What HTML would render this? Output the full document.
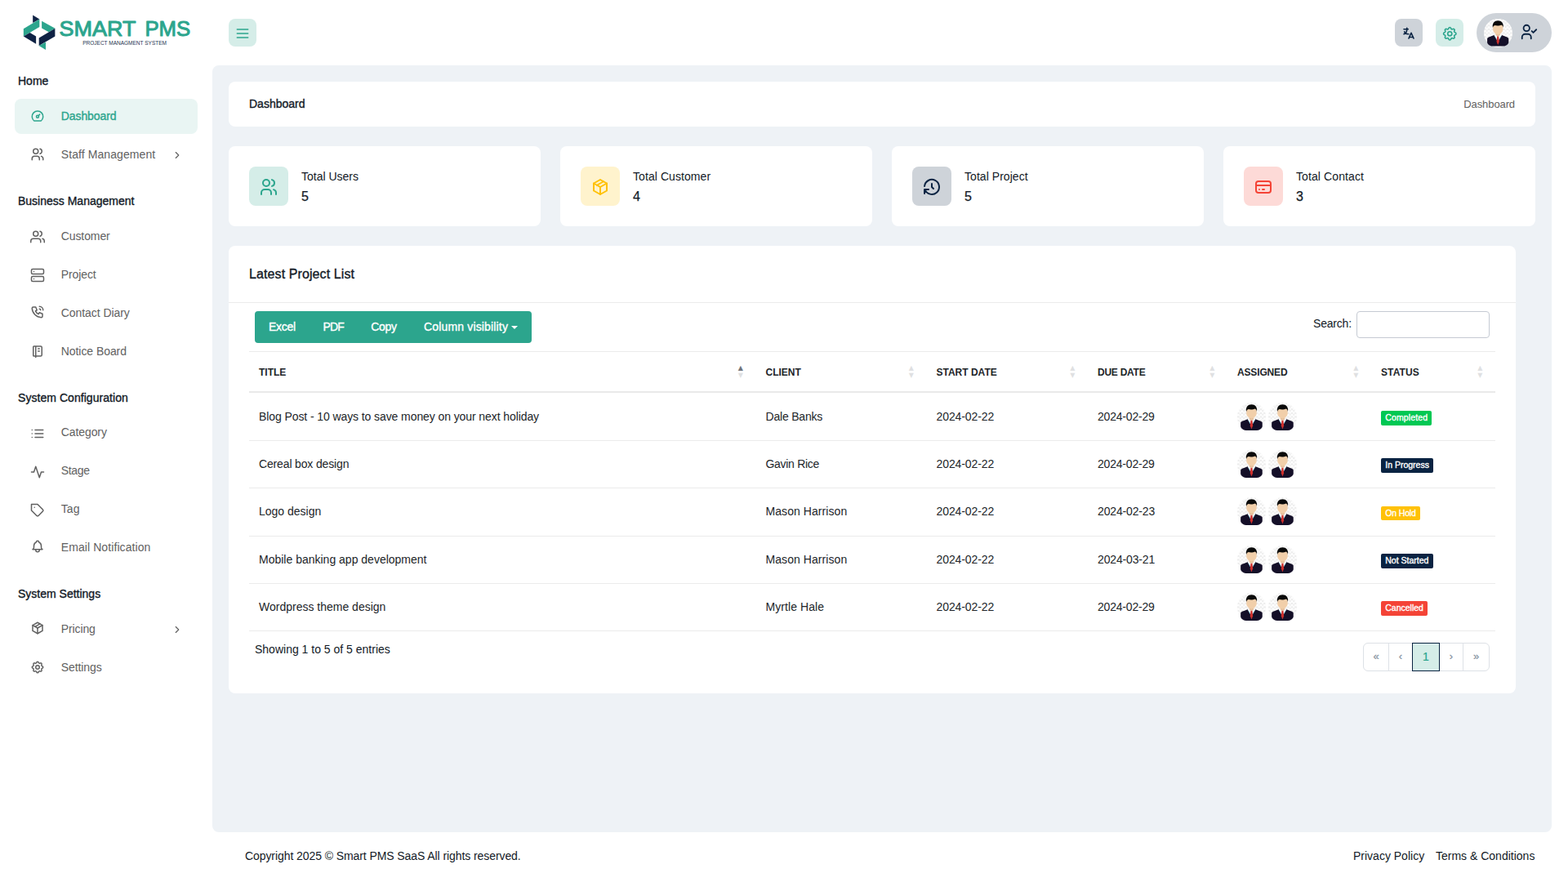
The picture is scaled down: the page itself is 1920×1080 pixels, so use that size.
<!DOCTYPE html>
<html lang="en">
<head>
<meta charset="utf-8">
<title>Dashboard | Smart PMS SaaS</title>
<style>
*{box-sizing:border-box}
html,body{margin:0;padding:0}
body{width:1920px;height:1080px;overflow:hidden;background:#fff;font-family:"Liberation Sans",sans-serif;font-size:14px;color:#121926;position:relative;line-height:1.5}
.abs{position:absolute}
a{text-decoration:none}
.med{-webkit-text-stroke:.35px currentColor}
svg.ti{fill:none;stroke:currentColor;stroke-width:2;stroke-linecap:round;stroke-linejoin:round;display:block}
#sidebar{position:absolute;left:0;top:0;width:260px;height:1080px;background:#fff}
.cap{position:absolute;left:22px;font-size:14px;color:#121926;line-height:20px;white-space:nowrap}
.nav{position:absolute;left:18px;width:224px;height:43px;border-radius:8px;color:#616161;white-space:nowrap;display:block}
.nav.active{background:#e9f5f3;color:#2ca58d}
.nav svg.ti{position:absolute;left:19px;top:11.6px;width:18px;height:18px;stroke-width:2}
.nav svg.ti.fe{top:12.5px}
.nav .lbl{position:absolute;left:56.75px;top:0;line-height:43px;font-size:14px}
.nav svg.arrow{position:absolute;left:192px;top:15px;width:14px;height:14px;stroke-width:2}
.hbtn{position:absolute;width:34px;height:34px;border-radius:8px;top:23px}
#main{position:absolute;left:260px;top:80px;width:1640px;height:939px;background:#eef2f6;border-radius:8px}
.card{position:absolute;background:#fff;border-radius:8px}
.stat .ibox{position:absolute;left:25px;top:25px;width:48px;height:48px;border-radius:8px}
.stat .ibox svg{position:absolute;left:12px;top:13px;width:24px;height:24px;stroke-width:2}
.stat .t{position:absolute;left:89px;top:26px;line-height:22px;font-size:14px;white-space:nowrap;color:#121926}
.stat .n{position:absolute;left:89px;top:50px;line-height:24px;font-size:16px;-webkit-text-stroke:.25px currentColor;white-space:nowrap;color:#121926}
.btns span{position:absolute;top:0;line-height:39px;font-size:14px;white-space:nowrap}
.btns .caret{position:absolute;left:314px;top:18px;width:0;height:0;border-left:4px solid transparent;border-right:4px solid transparent;border-top:4px solid #fff}
.th{position:absolute;top:0;height:49px}
.th .thl{position:absolute;left:12px;top:1px;line-height:49px;font-size:12px;font-weight:700;color:#212529;white-space:nowrap}
.th::before,.th::after{position:absolute;right:15.5px;font-size:8px;line-height:9px;color:#121926;opacity:.13;font-family:"DejaVu Sans",sans-serif}
.th.asc::before{opacity:.6}
.th::before{content:"\25B2";top:15px}
.th::after{content:"\25BC";top:24px}
.tr{position:absolute;left:0;width:1526px;border-bottom:1px solid #ebebeb}
.td{position:absolute;top:0;padding-left:12px;font-size:14px;color:#212529;white-space:nowrap}
.badge{position:absolute;height:18px;line-height:17px;padding:0 5.25px;font-size:10.5px;font-weight:400;color:#fff;border-radius:2px;white-space:nowrap}
.pg span{position:absolute;top:0;height:35px;border:1px solid #dde1e6;line-height:32px;text-align:center;font-size:13px;color:#8592a0;background:#fff}
.pg span.act{font-size:14px;line-height:33px}
.pg span.act{background:#d5ede8;border-color:#0a2342;color:#2ca58d;z-index:2}
.av{position:absolute;border-radius:50%;background-color:#fdfdfd;background-image:conic-gradient(#ececec 25%,#fdfdfd 0 50%,#ececec 0 75%,#fdfdfd 0);background-size:4.6px 4.6px}
.av svg{display:block;overflow:visible}
.pg span{-webkit-text-stroke:.2px currentColor}

</style>
</head>
<body>
<div id="sidebar">
<svg class="abs" style="left:0;top:0" width="260" height="80" viewBox="0 0 260 80">
<polygon points="40.2,18.6 48.3,23.4 40.2,28" fill="#0f2244"/>
<polygon points="28.8,35.3 48.3,23.5 48.3,33 28.8,44.4" fill="#2ca58d"/>
<polygon points="28.8,44.4 36.6,40 44.1,44.4 44.1,53.7" fill="#0f2244"/>
<polygon points="51.1,25.7 67.4,34.8 59.7,39.2 51.1,34.5" fill="#2ca58d"/>
<polygon points="67.4,34.8 67.4,44.4 47.7,56 47.7,46.5" fill="#0f2244"/>
<polygon points="47.7,56 56,51.4 56,61" fill="#2ca58d"/>
<text y="44.400" font-family="Liberation Sans, sans-serif" font-size="26.500" fill="#2ca58d" stroke="#2ca58d" stroke-width="1" stroke-linejoin="round"><tspan x="72.600" textLength="93.400" lengthAdjust="spacingAndGlyphs">SMART</tspan> <tspan x="177.400" textLength="55.800" lengthAdjust="spacingAndGlyphs">PMS</tspan></text>
<text x="101.200" y="54.800" font-family="Liberation Sans, sans-serif" font-size="8" fill="#26334f" textLength="102.800" lengthAdjust="spacingAndGlyphs">PROJECT MANAGMENT SYSTEM</text>
</svg>
<div class="cap med" style="top:89px">Home</div>
<a class="nav active" style="top:121px"><svg class="ti" viewBox="0 0 24 24" ><circle cx="12" cy="13" r="2"/><path d="M13.45 11.55l2.05 -2.05"/><path d="M6.4 20a9 9 0 1 1 11.2 0z"/></svg><span class="lbl med" style="letter-spacing:-0.083px">Dashboard</span></a>
<a class="nav" style="top:168px"><svg class="ti" viewBox="0 0 24 24" ><circle cx="9" cy="7" r="4"/><path d="M3 21v-2a4 4 0 0 1 4 -4h4a4 4 0 0 1 4 4v2"/><path d="M16 3.13a4 4 0 0 1 0 7.75"/><path d="M21 21v-2a4 4 0 0 0 -3 -3.85"/></svg><span class="lbl" style="letter-spacing:0.083px">Staff Management</span><svg class="ti arrow" viewBox="0 0 24 24" ><polyline points="9 18 15 12 9 6"/></svg></a>
<div class="cap med" style="top:236px">Business Management</div>
<a class="nav" style="top:268px"><svg class="ti fe" viewBox="0 0 24 24" ><path d="M17 21v-2a4 4 0 0 0-4-4H5a4 4 0 0 0-4 4v2"/><circle cx="9" cy="7" r="4"/><path d="M23 21v-2a4 4 0 0 0-3-3.870"/><path d="M16 3.130a4 4 0 0 1 0 7.750"/></svg><span class="lbl" style="letter-spacing:-0.094px">Customer</span></a>
<a class="nav" style="top:315px"><svg class="ti fe" viewBox="0 0 24 24" ><rect x="2" y="2" width="20" height="8" rx="2" ry="2"/><rect x="2" y="14" width="20" height="8" rx="2" ry="2"/><line x1="6" y1="6" x2="6.010" y2="6"/><line x1="6" y1="18" x2="6.010" y2="18"/></svg><span class="lbl" style="letter-spacing:-0.107px">Project</span></a>
<a class="nav" style="top:362px"><svg class="ti" viewBox="0 0 24 24" style="margin-top:-0.5px"><path d="M5 4h4l2 5l-2.5 1.5a11 11 0 0 0 5 5l1.5 -2.5l5 2v4a2 2 0 0 1 -2 2a16 16 0 0 1 -15 -15a2 2 0 0 1 2 -2"/><path d="M15 7a2 2 0 0 1 2 2"/><path d="M15 3a6 6 0 0 1 6 6"/></svg><span class="lbl" style="letter-spacing:-0.058px">Contact Diary</span></a>
<a class="nav" style="top:409px"><svg class="ti" viewBox="0 0 24 24" ><path d="M6 4h11a2 2 0 0 1 2 2v12a2 2 0 0 1 -2 2h-11a1 1 0 0 1 -1 -1v-14a1 1 0 0 1 1 -1m3 0v18"/><path d="M13 8h2"/><path d="M13 12h2"/></svg><span class="lbl" style="letter-spacing:-0.062px">Notice Board</span></a>
<div class="cap med" style="top:477px;letter-spacing:0.05px">System Configuration</div>
<a class="nav" style="top:509px"><svg class="ti fe" viewBox="0 0 24 24" ><line x1="8" y1="6" x2="21" y2="6"/><line x1="8" y1="12" x2="21" y2="12"/><line x1="8" y1="18" x2="21" y2="18"/><line x1="3" y1="6" x2="3.010" y2="6"/><line x1="3" y1="12" x2="3.010" y2="12"/><line x1="3" y1="18" x2="3.010" y2="18"/></svg><span class="lbl" style="letter-spacing:-0.094px;top:-1px">Category</span></a>
<a class="nav" style="top:556px"><svg class="ti fe" viewBox="0 0 24 24" ><polyline points="22 12 18 12 15 21 9 3 6 12 2 12"/></svg><span class="lbl" style="letter-spacing:-0.35px;top:-1px">Stage</span></a>
<a class="nav" style="top:603px"><svg class="ti fe" viewBox="0 0 24 24" ><path d="M20.590 13.410l-7.170 7.170a2 2 0 0 1-2.830 0L2 12V2h10l8.590 8.590a2 2 0 0 1 0 2.820z"/><line x1="7" y1="7" x2="7.010" y2="7"/></svg><span class="lbl" style="letter-spacing:0.05px;top:-1px">Tag</span></a>
<a class="nav" style="top:650px"><svg class="ti" viewBox="0 0 24 24" style="margin-top:-1.2px"><path d="M10 5a2 2 0 0 1 4 0a7 7 0 0 1 4 6v3a4 4 0 0 0 2 3h-16a4 4 0 0 0 2 -3v-3a7 7 0 0 1 4 -6"/><path d="M9 17v1a3 3 0 0 0 6 0v-1"/></svg><span class="lbl" style="letter-spacing:0.088px;top:-1px">Email Notification</span></a>
<div class="cap med" style="top:717px">System Settings</div>
<a class="nav" style="top:750px"><svg class="ti" viewBox="0 0 24 24" style="margin-top:-1.4px"><path d="M12 3l8 4.5v9l-8 4.5l-8 -4.5v-9l8 -4.5"/><path d="M12 12l8 -4.5"/><path d="M12 12v9"/><path d="M12 12l-8 -4.5"/><path d="M16 5.25l-8 4.5"/></svg><span class="lbl" style="letter-spacing:-0.107px;top:-1px">Pricing</span><svg class="ti arrow" viewBox="0 0 24 24" style="margin-top:-1px"><polyline points="9 18 15 12 9 6"/></svg></a>
<a class="nav" style="top:797px"><svg class="ti" viewBox="0 0 24 24" style="margin-top:-1.1px"><path d="M10.325 4.317c.426 -1.756 2.924 -1.756 3.35 0a1.724 1.724 0 0 0 2.573 1.066c1.543 -.94 3.31 .826 2.37 2.37a1.724 1.724 0 0 0 1.065 2.572c1.756 .426 1.756 2.924 0 3.35a1.724 1.724 0 0 0 -1.066 2.573c.94 1.543 -.826 3.31 -2.37 2.37a1.724 1.724 0 0 0 -2.572 1.065c-.426 1.756 -2.924 1.756 -3.35 0a1.724 1.724 0 0 0 -2.573 -1.066c-1.543 .94 -3.31 -.826 -2.37 -2.37a1.724 1.724 0 0 0 -1.065 -2.572c-1.756 -.426 -1.756 -2.924 0 -3.35a1.724 1.724 0 0 0 1.066 -2.573c-.94 -1.543 .826 -3.31 2.37 -2.37c1 .608 2.296 .07 2.572 -1.065z"/><circle cx="12" cy="12" r="3"/></svg><span class="lbl" style="letter-spacing:-0.094px;top:-1px">Settings</span></a>
</div>

<div class="hbtn" style="left:280px;background:#d5ede8;color:#2ca58d"><svg class="ti" viewBox="0 0 24 24" style="position:absolute;left:7px;top:8px;width:20px;height:20px;stroke-width:1.9"><path d="M4 6h16"/><path d="M4 12h16"/><path d="M4 18h16"/></svg></div>
<div class="hbtn" style="left:1708px;background:#ced3d9;color:#0a2342"><svg class="ti" viewBox="0 0 24 24" style="position:absolute;left:8.3px;top:9px;width:18px;height:18px;stroke-width:2.2"><path d="M4 5h7"/><path d="M9 3v2c0 4.418 -2.239 8 -5 8"/><path d="M5 9c0 2.144 2.952 3.908 6.7 4"/><path d="M12 20l4 -9l4 9"/><path d="M19.1 18h-6.2"/></svg></div>
<div class="hbtn" style="left:1758px;background:#d5ede8;color:#2ca58d"><svg class="ti" viewBox="0 0 24 24" style="position:absolute;left:7px;top:7.8px;width:20.500px;height:20.500px;stroke-width:1.9"><path d="M10.325 4.317c.426 -1.756 2.924 -1.756 3.35 0a1.724 1.724 0 0 0 2.573 1.066c1.543 -.94 3.31 .826 2.37 2.37a1.724 1.724 0 0 0 1.065 2.572c1.756 .426 1.756 2.924 0 3.35a1.724 1.724 0 0 0 -1.066 2.573c.94 1.543 -.826 3.31 -2.37 2.37a1.724 1.724 0 0 0 -2.572 1.065c-.426 1.756 -2.924 1.756 -3.35 0a1.724 1.724 0 0 0 -2.573 -1.066c-1.543 .94 -3.31 -.826 -2.37 -2.37a1.724 1.724 0 0 0 -1.065 -2.572c-1.756 -.426 -1.756 -2.924 0 -3.35a1.724 1.724 0 0 0 1.066 -2.573c-.94 -1.543 .826 -3.31 2.37 -2.37c1 .608 2.296 .07 2.572 -1.065z"/><circle cx="12" cy="12" r="3"/></svg></div>
<div class="abs" style="left:1808px;top:16px;width:92px;height:48px;border-radius:24px;background:#ced3d9;color:#0a2342">
<div class="av" style="left:9px;top:7px;width:34.5px;height:34.5px"><svg viewBox="0 0.3 34.6 34.6" width="34.5" height="34.5"><path d="M4.100 29.300 V25.300 C4.100 24 4.800 23.400 6 22.900 L12.500 20.300 L17.250 26 L22 20.300 L28.500 22.900 C29.700 23.400 30.400 24 30.400 25.300 V29.300 C30.100 31.200 27.500 33.700 24 33.950 H10.500 C7 33.700 4.400 31.200 4.100 29.300Z" fill="#140f28"/><path d="M12.700 20.600 L14.800 19.200 L19.700 19.200 L21.800 20.600 L17.250 28.500Z" fill="#fff"/><path d="M13.300 21.300 L16.300 26.600 M21.200 21.300 L18.200 26.600" stroke="#7fd3e6" stroke-width=".6" fill="none"/><path d="M16.300 21.200 L18.200 21.200 L18.900 28.300 L17.250 32.500 L15.600 28.300Z" fill="#cf2f2c"/><path d="M14.500 17 H20 V20.200 L17.250 22.300 L14.500 20.200Z" fill="#e6bf9b"/><path d="M11.100 10 C11.100 7.200 13.800 6.300 17.250 6.300 C20.700 6.300 23.400 7.200 23.400 10 V13.300 C23.400 16.400 20.400 19.500 17.250 19.500 C14.100 19.500 11.100 16.400 11.100 13.300Z" fill="#f1cfaa"/><path d="M10.900 11.300 C10 5.600 13 2.600 17.300 2.600 C21.600 2.600 24.600 5.600 23.700 11.300 C23.500 9.300 22.800 8.200 21.300 7.700 C19.500 8.900 15.800 9.100 13.500 8.300 C12.200 8.800 11.300 9.700 10.900 11.300Z" fill="#0a0a0a"/></svg></div>
<svg class="ti" viewBox="0 0 24 24" style="position:absolute;left:53.2px;top:12.3px;width:22px;height:22px;stroke-width:2"><circle cx="9" cy="7" r="4"/><path d="M3 21v-2a4 4 0 0 1 4 -4h4a4 4 0 0 1 4 4v2"/><path d="M16 11l2 2l4 -4"/></svg>
</div>
<div id="main">
<div class="card" style="left:20px;top:20px;width:1600px;height:55px">
<div class="abs med" style="left:25px;top:0;line-height:55px;font-size:14px;color:#121926">Dashboard</div>
<div class="abs" style="right:25px;top:0;line-height:55px;font-size:13px;color:#616161;letter-spacing:-.1px">Dashboard</div>
</div>
<div class="card stat" style="left:20px;top:99px;width:382px;height:98px"><div class="ibox" style="background:#d5ede8;color:#2ca58d"><svg class="ti" viewBox="0 0 24 24" ><circle cx="9" cy="7" r="4"/><path d="M3 21v-2a4 4 0 0 1 4 -4h4a4 4 0 0 1 4 4v2"/><path d="M16 3.13a4 4 0 0 1 0 7.75"/><path d="M21 21v-2a4 4 0 0 0 -3 -3.85"/></svg></div><div class="t">Total Users</div><div class="n med">5</div></div>
<div class="card stat" style="left:426px;top:99px;width:382px;height:98px"><div class="ibox" style="background:#fff3cd;color:#ffc107"><svg class="ti" viewBox="0 0 24 24" ><path d="M12 3l8 4.5v9l-8 4.5l-8 -4.5v-9l8 -4.5"/><path d="M12 12l8 -4.5"/><path d="M12 12v9"/><path d="M12 12l-8 -4.5"/><path d="M16 5.25l-8 4.5"/></svg></div><div class="t" style="letter-spacing:0.07px">Total Customer</div><div class="n med">4</div></div>
<div class="card stat" style="left:832px;top:99px;width:382px;height:98px"><div class="ibox" style="background:#ced3d9;color:#0a2342"><svg class="ti" viewBox="0 0 24 24" ><path d="M12 8v4l2 2"/><path d="M3.05 11a9 9 0 1 1 .5 4m-.5 5v-5h5"/></svg></div><div class="t" style="letter-spacing:0.05px">Total Project</div><div class="n med">5</div></div>
<div class="card stat" style="left:1238px;top:99px;width:382px;height:98px"><div class="ibox" style="background:#fddad7;color:#f44336"><svg class="ti" viewBox="0 0 24 24" ><rect x="3" y="5" width="18" height="14" rx="3"/><path d="M3 10h18"/><path d="M7 15h.01"/><path d="M11 15h2"/></svg></div><div class="t" style="letter-spacing:0.1px">Total Contact</div><div class="n med">3</div></div>

<div class="card" style="left:20px;top:221px;width:1576px;height:548px">
<div class="abs med" style="left:25px;top:21px;line-height:28px;font-size:16px;color:#121926;letter-spacing:.1px">Latest Project List</div>
<div class="abs" style="left:0;top:69px;width:1576px;height:1px;background:#ebebeb"></div>
<div class="abs btns" style="left:32px;top:80px;width:339px;height:39px;border-radius:4px;background:#2ca58d;color:#fff">
<span class="med" style="left:17px;letter-spacing:-.3px">Excel</span><span class="med" style="left:83.400px;letter-spacing:-.8px">PDF</span><span class="med" style="left:142.300px;letter-spacing:-.35px">Copy</span><span class="med" style="left:207px;letter-spacing:.16px">Column visibility</span><i class="caret"></i>
</div>
<div class="abs" style="left:1328px;top:79px;line-height:32px;font-size:14px;color:#121926;letter-spacing:-.2px">Search:</div>
<div class="abs" style="left:1381px;top:80px;width:163px;height:33px;border:1px solid #c5cad3;border-radius:4px;background:#fff"></div>
<div class="abs tbl" style="left:25px;top:0;width:1526px">
<div class="abs" style="left:0;top:129px;width:1526px;height:1px;background:#ebebeb"></div>
<div class="abs thead" style="left:0;top:130px;width:1526px;height:49px"><div class="th asc" style="left:0px;width:620.5px"><span class="thl">TITLE</span></div><div class="th" style="left:620.5px;width:209px"><span class="thl">CLIENT</span></div><div class="th" style="left:829.5px;width:197.5px"><span class="thl">START DATE</span></div><div class="th" style="left:1027px;width:171px"><span class="thl" style="letter-spacing:-0.25px">DUE DATE</span></div><div class="th" style="left:1198px;width:176px"><span class="thl" style="letter-spacing:-0.15px">ASSIGNED</span></div><div class="th" style="left:1374px;width:152px"><span class="thl" style="letter-spacing:0.1px">STATUS</span></div></div>
<div class="abs" style="left:0;top:178px;width:1526px;height:2px;background:#e9e9e9"></div>
</div>
<div class="abs" style="left:25px;top:-221px;width:1526px"><div class="tr" style="top:400px;height:60px"><div class="td" style="left:0px;top:1px;line-height:59px;letter-spacing:-0.09px">Blog Post - 10 ways to save money on your next holiday</div><div class="td" style="left:620.5px;top:1px;line-height:59px;letter-spacing:-0.2px">Dale Banks</div><div class="td" style="left:829.5px;top:1px;line-height:59px;letter-spacing:-0.09px">2024-02-22</div><div class="td" style="left:1027px;top:1px;line-height:59px;letter-spacing:-0.2px">2024-02-29</div><div class="av" style="left:1210px;top:13px;width:35px;height:35px"><svg viewBox="0 0.3 34.6 34.6" width="35" height="35"><path d="M4.100 29.300 V25.300 C4.100 24 4.800 23.400 6 22.900 L12.500 20.300 L17.250 26 L22 20.300 L28.500 22.900 C29.700 23.400 30.400 24 30.400 25.300 V29.300 C30.100 31.200 27.500 33.700 24 33.950 H10.500 C7 33.700 4.400 31.200 4.100 29.300Z" fill="#140f28"/><path d="M12.700 20.600 L14.800 19.200 L19.700 19.200 L21.800 20.600 L17.250 28.500Z" fill="#fff"/><path d="M13.300 21.300 L16.300 26.600 M21.200 21.300 L18.200 26.600" stroke="#7fd3e6" stroke-width=".6" fill="none"/><path d="M16.300 21.200 L18.200 21.200 L18.900 28.300 L17.250 32.500 L15.600 28.300Z" fill="#cf2f2c"/><path d="M14.500 17 H20 V20.200 L17.250 22.300 L14.500 20.200Z" fill="#e6bf9b"/><path d="M11.100 10 C11.100 7.200 13.800 6.300 17.250 6.300 C20.700 6.300 23.400 7.200 23.400 10 V13.300 C23.400 16.400 20.400 19.500 17.250 19.500 C14.100 19.500 11.100 16.400 11.100 13.300Z" fill="#f1cfaa"/><path d="M10.900 11.300 C10 5.600 13 2.600 17.300 2.600 C21.600 2.600 24.600 5.600 23.700 11.300 C23.500 9.300 22.800 8.200 21.300 7.700 C19.500 8.900 15.800 9.100 13.500 8.300 C12.200 8.800 11.300 9.700 10.900 11.300Z" fill="#0a0a0a"/></svg></div><div class="av" style="left:1248.3px;top:13px;width:35px;height:35px"><svg viewBox="0 0.3 34.6 34.6" width="35" height="35"><path d="M4.100 29.300 V25.300 C4.100 24 4.800 23.400 6 22.900 L12.500 20.300 L17.250 26 L22 20.300 L28.500 22.900 C29.700 23.400 30.400 24 30.400 25.300 V29.300 C30.100 31.200 27.500 33.700 24 33.950 H10.500 C7 33.700 4.400 31.200 4.100 29.300Z" fill="#140f28"/><path d="M12.700 20.600 L14.800 19.200 L19.700 19.200 L21.800 20.600 L17.250 28.500Z" fill="#fff"/><path d="M13.300 21.300 L16.300 26.600 M21.200 21.300 L18.200 26.600" stroke="#7fd3e6" stroke-width=".6" fill="none"/><path d="M16.300 21.200 L18.200 21.200 L18.900 28.300 L17.250 32.500 L15.600 28.300Z" fill="#cf2f2c"/><path d="M14.500 17 H20 V20.200 L17.250 22.300 L14.500 20.200Z" fill="#e6bf9b"/><path d="M11.100 10 C11.100 7.200 13.800 6.300 17.250 6.300 C20.700 6.300 23.400 7.200 23.400 10 V13.300 C23.400 16.400 20.400 19.500 17.250 19.500 C14.100 19.500 11.100 16.400 11.100 13.300Z" fill="#f1cfaa"/><path d="M10.900 11.300 C10 5.600 13 2.600 17.300 2.600 C21.600 2.600 24.600 5.600 23.700 11.300 C23.500 9.300 22.800 8.200 21.300 7.700 C19.500 8.900 15.800 9.100 13.500 8.300 C12.200 8.800 11.300 9.700 10.900 11.300Z" fill="#0a0a0a"/></svg></div><span class="badge med" style="left:1386px;top:23px;background:#00c853;letter-spacing:.13px">Completed</span></div>
<div class="tr" style="top:460px;height:58px"><div class="td" style="left:0px;top:0px;line-height:57px;letter-spacing:-0.15px">Cereal box design</div><div class="td" style="left:620.5px;top:0px;line-height:57px;letter-spacing:-0.3px">Gavin Rice</div><div class="td" style="left:829.5px;top:0px;line-height:57px;letter-spacing:-0.09px">2024-02-22</div><div class="td" style="left:1027px;top:0px;line-height:57px;letter-spacing:-0.2px">2024-02-29</div><div class="av" style="left:1210px;top:11px;width:35px;height:35px"><svg viewBox="0 0.3 34.6 34.6" width="35" height="35"><path d="M4.100 29.300 V25.300 C4.100 24 4.800 23.400 6 22.900 L12.500 20.300 L17.250 26 L22 20.300 L28.500 22.900 C29.700 23.400 30.400 24 30.400 25.300 V29.300 C30.100 31.200 27.500 33.700 24 33.950 H10.500 C7 33.700 4.400 31.200 4.100 29.300Z" fill="#140f28"/><path d="M12.700 20.600 L14.800 19.200 L19.700 19.200 L21.800 20.600 L17.250 28.500Z" fill="#fff"/><path d="M13.300 21.300 L16.300 26.600 M21.200 21.300 L18.200 26.600" stroke="#7fd3e6" stroke-width=".6" fill="none"/><path d="M16.300 21.200 L18.200 21.200 L18.900 28.300 L17.250 32.500 L15.600 28.300Z" fill="#cf2f2c"/><path d="M14.500 17 H20 V20.200 L17.250 22.300 L14.500 20.200Z" fill="#e6bf9b"/><path d="M11.100 10 C11.100 7.200 13.800 6.300 17.250 6.300 C20.700 6.300 23.400 7.200 23.400 10 V13.300 C23.400 16.400 20.400 19.500 17.250 19.500 C14.100 19.500 11.100 16.400 11.100 13.300Z" fill="#f1cfaa"/><path d="M10.900 11.300 C10 5.600 13 2.600 17.300 2.600 C21.600 2.600 24.600 5.600 23.700 11.300 C23.500 9.300 22.800 8.200 21.300 7.700 C19.500 8.900 15.800 9.100 13.500 8.300 C12.200 8.800 11.300 9.700 10.900 11.300Z" fill="#0a0a0a"/></svg></div><div class="av" style="left:1248.3px;top:11px;width:35px;height:35px"><svg viewBox="0 0.3 34.6 34.6" width="35" height="35"><path d="M4.100 29.300 V25.300 C4.100 24 4.800 23.400 6 22.900 L12.500 20.300 L17.250 26 L22 20.300 L28.500 22.900 C29.700 23.400 30.400 24 30.400 25.300 V29.300 C30.100 31.200 27.500 33.700 24 33.950 H10.500 C7 33.700 4.400 31.200 4.100 29.300Z" fill="#140f28"/><path d="M12.700 20.600 L14.800 19.200 L19.700 19.200 L21.800 20.600 L17.250 28.500Z" fill="#fff"/><path d="M13.300 21.300 L16.300 26.600 M21.200 21.300 L18.200 26.600" stroke="#7fd3e6" stroke-width=".6" fill="none"/><path d="M16.300 21.200 L18.200 21.200 L18.900 28.300 L17.250 32.500 L15.600 28.300Z" fill="#cf2f2c"/><path d="M14.500 17 H20 V20.200 L17.250 22.300 L14.500 20.200Z" fill="#e6bf9b"/><path d="M11.100 10 C11.100 7.200 13.800 6.300 17.250 6.300 C20.700 6.300 23.400 7.200 23.400 10 V13.300 C23.400 16.400 20.400 19.500 17.250 19.500 C14.100 19.500 11.100 16.400 11.100 13.300Z" fill="#f1cfaa"/><path d="M10.900 11.300 C10 5.600 13 2.600 17.300 2.600 C21.600 2.600 24.600 5.600 23.700 11.300 C23.500 9.300 22.800 8.200 21.300 7.700 C19.500 8.900 15.800 9.100 13.500 8.300 C12.200 8.800 11.300 9.700 10.900 11.300Z" fill="#0a0a0a"/></svg></div><span class="badge med" style="left:1386px;top:21px;background:#0a2342">In Progress</span></div>
<div class="tr" style="top:518px;height:59px"><div class="td" style="left:0px;top:-1px;line-height:58px">Logo design</div><div class="td" style="left:620.5px;top:-1px;line-height:58px;letter-spacing:0.07px">Mason Harrison</div><div class="td" style="left:829.5px;top:-1px;line-height:58px;letter-spacing:-0.09px">2024-02-22</div><div class="td" style="left:1027px;top:-1px;line-height:58px;letter-spacing:-0.15px">2024-02-23</div><div class="av" style="left:1210px;top:11px;width:35px;height:35px"><svg viewBox="0 0.3 34.6 34.6" width="35" height="35"><path d="M4.100 29.300 V25.300 C4.100 24 4.800 23.400 6 22.900 L12.500 20.300 L17.250 26 L22 20.300 L28.500 22.900 C29.700 23.400 30.400 24 30.400 25.300 V29.300 C30.100 31.200 27.500 33.700 24 33.950 H10.500 C7 33.700 4.400 31.200 4.100 29.300Z" fill="#140f28"/><path d="M12.700 20.600 L14.800 19.200 L19.700 19.200 L21.800 20.600 L17.250 28.500Z" fill="#fff"/><path d="M13.300 21.300 L16.300 26.600 M21.200 21.300 L18.200 26.600" stroke="#7fd3e6" stroke-width=".6" fill="none"/><path d="M16.300 21.200 L18.200 21.200 L18.900 28.300 L17.250 32.500 L15.600 28.300Z" fill="#cf2f2c"/><path d="M14.500 17 H20 V20.200 L17.250 22.300 L14.500 20.200Z" fill="#e6bf9b"/><path d="M11.100 10 C11.100 7.200 13.800 6.300 17.250 6.300 C20.700 6.300 23.400 7.200 23.400 10 V13.300 C23.400 16.400 20.400 19.500 17.250 19.500 C14.100 19.500 11.100 16.400 11.100 13.300Z" fill="#f1cfaa"/><path d="M10.900 11.300 C10 5.600 13 2.600 17.300 2.600 C21.600 2.600 24.600 5.600 23.700 11.300 C23.500 9.300 22.800 8.200 21.300 7.700 C19.500 8.900 15.800 9.100 13.500 8.300 C12.200 8.800 11.300 9.700 10.900 11.300Z" fill="#0a0a0a"/></svg></div><div class="av" style="left:1248.3px;top:11px;width:35px;height:35px"><svg viewBox="0 0.3 34.6 34.6" width="35" height="35"><path d="M4.100 29.300 V25.300 C4.100 24 4.800 23.400 6 22.900 L12.500 20.300 L17.250 26 L22 20.300 L28.500 22.900 C29.700 23.400 30.400 24 30.400 25.300 V29.300 C30.100 31.200 27.500 33.700 24 33.950 H10.500 C7 33.700 4.400 31.200 4.100 29.300Z" fill="#140f28"/><path d="M12.700 20.600 L14.800 19.200 L19.700 19.200 L21.800 20.600 L17.250 28.500Z" fill="#fff"/><path d="M13.300 21.300 L16.300 26.600 M21.200 21.300 L18.200 26.600" stroke="#7fd3e6" stroke-width=".6" fill="none"/><path d="M16.300 21.200 L18.200 21.200 L18.900 28.300 L17.250 32.500 L15.600 28.300Z" fill="#cf2f2c"/><path d="M14.500 17 H20 V20.200 L17.250 22.300 L14.500 20.200Z" fill="#e6bf9b"/><path d="M11.100 10 C11.100 7.200 13.800 6.300 17.250 6.300 C20.700 6.300 23.400 7.200 23.400 10 V13.300 C23.400 16.400 20.400 19.500 17.250 19.500 C14.100 19.500 11.100 16.400 11.100 13.300Z" fill="#f1cfaa"/><path d="M10.900 11.300 C10 5.600 13 2.600 17.300 2.600 C21.600 2.600 24.600 5.600 23.700 11.300 C23.500 9.300 22.800 8.200 21.300 7.700 C19.500 8.900 15.800 9.100 13.500 8.300 C12.200 8.800 11.300 9.700 10.900 11.300Z" fill="#0a0a0a"/></svg></div><span class="badge med" style="left:1386px;top:22px;background:#ffc107;letter-spacing:-.15px;height:17px;line-height:16px">On Hold</span></div>
<div class="tr" style="top:577px;height:58px"><div class="td" style="left:0px;top:0px;line-height:57px">Mobile banking app development</div><div class="td" style="left:620.5px;top:0px;line-height:57px;letter-spacing:0.07px">Mason Harrison</div><div class="td" style="left:829.5px;top:0px;line-height:57px;letter-spacing:-0.09px">2024-02-22</div><div class="td" style="left:1027px;top:0px;line-height:57px;letter-spacing:-0.15px">2024-03-21</div><div class="av" style="left:1210px;top:11px;width:35px;height:35px"><svg viewBox="0 0.3 34.6 34.6" width="35" height="35"><path d="M4.100 29.300 V25.300 C4.100 24 4.800 23.400 6 22.900 L12.500 20.300 L17.250 26 L22 20.300 L28.500 22.900 C29.700 23.400 30.400 24 30.400 25.300 V29.300 C30.100 31.200 27.500 33.700 24 33.950 H10.500 C7 33.700 4.400 31.200 4.100 29.300Z" fill="#140f28"/><path d="M12.700 20.600 L14.800 19.200 L19.700 19.200 L21.800 20.600 L17.250 28.500Z" fill="#fff"/><path d="M13.300 21.300 L16.300 26.600 M21.200 21.300 L18.200 26.600" stroke="#7fd3e6" stroke-width=".6" fill="none"/><path d="M16.300 21.200 L18.200 21.200 L18.900 28.300 L17.250 32.500 L15.600 28.300Z" fill="#cf2f2c"/><path d="M14.500 17 H20 V20.200 L17.250 22.300 L14.500 20.200Z" fill="#e6bf9b"/><path d="M11.100 10 C11.100 7.200 13.800 6.300 17.250 6.300 C20.700 6.300 23.400 7.200 23.400 10 V13.300 C23.400 16.400 20.400 19.500 17.250 19.500 C14.100 19.500 11.100 16.400 11.100 13.300Z" fill="#f1cfaa"/><path d="M10.900 11.300 C10 5.600 13 2.600 17.300 2.600 C21.600 2.600 24.600 5.600 23.700 11.300 C23.500 9.300 22.800 8.200 21.300 7.700 C19.500 8.900 15.800 9.100 13.500 8.300 C12.200 8.800 11.300 9.700 10.900 11.300Z" fill="#0a0a0a"/></svg></div><div class="av" style="left:1248.3px;top:11px;width:35px;height:35px"><svg viewBox="0 0.3 34.6 34.6" width="35" height="35"><path d="M4.100 29.300 V25.300 C4.100 24 4.800 23.400 6 22.900 L12.500 20.300 L17.250 26 L22 20.300 L28.500 22.900 C29.700 23.400 30.400 24 30.400 25.300 V29.300 C30.100 31.200 27.500 33.700 24 33.950 H10.500 C7 33.700 4.400 31.200 4.100 29.300Z" fill="#140f28"/><path d="M12.700 20.600 L14.800 19.200 L19.700 19.200 L21.800 20.600 L17.250 28.500Z" fill="#fff"/><path d="M13.300 21.300 L16.300 26.600 M21.200 21.300 L18.200 26.600" stroke="#7fd3e6" stroke-width=".6" fill="none"/><path d="M16.300 21.200 L18.200 21.200 L18.900 28.300 L17.250 32.500 L15.600 28.300Z" fill="#cf2f2c"/><path d="M14.500 17 H20 V20.200 L17.250 22.300 L14.500 20.200Z" fill="#e6bf9b"/><path d="M11.100 10 C11.100 7.200 13.800 6.300 17.250 6.300 C20.700 6.300 23.400 7.200 23.400 10 V13.300 C23.400 16.400 20.400 19.500 17.250 19.500 C14.100 19.500 11.100 16.400 11.100 13.300Z" fill="#f1cfaa"/><path d="M10.900 11.300 C10 5.600 13 2.600 17.300 2.600 C21.600 2.600 24.600 5.600 23.700 11.300 C23.500 9.300 22.800 8.200 21.300 7.700 C19.500 8.900 15.800 9.100 13.500 8.300 C12.200 8.800 11.300 9.700 10.900 11.300Z" fill="#0a0a0a"/></svg></div><span class="badge med" style="left:1386px;top:21px;background:#0a2342">Not Started</span></div>
<div class="tr" style="top:635px;height:58px"><div class="td" style="left:0px;top:0px;line-height:57px">Wordpress theme design</div><div class="td" style="left:620.5px;top:0px;line-height:57px;letter-spacing:0.08px">Myrtle Hale</div><div class="td" style="left:829.5px;top:0px;line-height:57px;letter-spacing:-0.09px">2024-02-22</div><div class="td" style="left:1027px;top:0px;line-height:57px;letter-spacing:-0.2px">2024-02-29</div><div class="av" style="left:1210px;top:11px;width:35px;height:35px"><svg viewBox="0 0.3 34.6 34.6" width="35" height="35"><path d="M4.100 29.300 V25.300 C4.100 24 4.800 23.400 6 22.900 L12.500 20.300 L17.250 26 L22 20.300 L28.500 22.900 C29.700 23.400 30.400 24 30.400 25.300 V29.300 C30.100 31.200 27.500 33.700 24 33.950 H10.500 C7 33.700 4.400 31.200 4.100 29.300Z" fill="#140f28"/><path d="M12.700 20.600 L14.800 19.200 L19.700 19.200 L21.800 20.600 L17.250 28.500Z" fill="#fff"/><path d="M13.300 21.300 L16.300 26.600 M21.200 21.300 L18.200 26.600" stroke="#7fd3e6" stroke-width=".6" fill="none"/><path d="M16.300 21.200 L18.200 21.200 L18.900 28.300 L17.250 32.500 L15.600 28.300Z" fill="#cf2f2c"/><path d="M14.500 17 H20 V20.200 L17.250 22.300 L14.500 20.200Z" fill="#e6bf9b"/><path d="M11.100 10 C11.100 7.200 13.800 6.300 17.250 6.300 C20.700 6.300 23.400 7.200 23.400 10 V13.300 C23.400 16.400 20.400 19.500 17.250 19.500 C14.100 19.500 11.100 16.400 11.100 13.300Z" fill="#f1cfaa"/><path d="M10.900 11.300 C10 5.600 13 2.600 17.300 2.600 C21.600 2.600 24.600 5.600 23.700 11.300 C23.500 9.300 22.800 8.200 21.300 7.700 C19.500 8.900 15.800 9.100 13.500 8.300 C12.200 8.800 11.300 9.700 10.900 11.300Z" fill="#0a0a0a"/></svg></div><div class="av" style="left:1248.3px;top:11px;width:35px;height:35px"><svg viewBox="0 0.3 34.6 34.6" width="35" height="35"><path d="M4.100 29.300 V25.300 C4.100 24 4.800 23.400 6 22.900 L12.500 20.300 L17.250 26 L22 20.300 L28.500 22.900 C29.700 23.400 30.400 24 30.400 25.300 V29.300 C30.100 31.200 27.500 33.700 24 33.950 H10.500 C7 33.700 4.400 31.200 4.100 29.300Z" fill="#140f28"/><path d="M12.700 20.600 L14.800 19.200 L19.700 19.200 L21.800 20.600 L17.250 28.500Z" fill="#fff"/><path d="M13.300 21.300 L16.300 26.600 M21.200 21.300 L18.200 26.600" stroke="#7fd3e6" stroke-width=".6" fill="none"/><path d="M16.300 21.200 L18.200 21.200 L18.900 28.300 L17.250 32.500 L15.600 28.300Z" fill="#cf2f2c"/><path d="M14.500 17 H20 V20.200 L17.250 22.300 L14.500 20.200Z" fill="#e6bf9b"/><path d="M11.100 10 C11.100 7.200 13.800 6.300 17.250 6.300 C20.700 6.300 23.400 7.200 23.400 10 V13.300 C23.400 16.400 20.400 19.500 17.250 19.500 C14.100 19.500 11.100 16.400 11.100 13.300Z" fill="#f1cfaa"/><path d="M10.900 11.300 C10 5.600 13 2.600 17.300 2.600 C21.600 2.600 24.600 5.600 23.700 11.300 C23.500 9.300 22.800 8.200 21.300 7.700 C19.500 8.900 15.800 9.100 13.500 8.300 C12.200 8.800 11.300 9.700 10.900 11.300Z" fill="#0a0a0a"/></svg></div><span class="badge med" style="left:1386px;top:21px;background:#f44336">Cancelled</span></div>
</div>
<div class="abs" style="left:32px;top:483px;line-height:22px;font-size:14px;color:#121926">Showing 1 to 5 of 5 entries</div>
<div class="abs pg" style="left:1389px;top:486px;width:155px;height:35px">
<span style="left:0;width:32px;border-radius:6px 0 0 6px">&laquo;</span><span style="left:31px;width:30px">&lsaquo;</span><span class="act" style="left:60px;width:34px">1</span><span style="left:93px;width:30px">&rsaquo;</span><span style="left:122px;width:33px;border-radius:0 6px 6px 0">&raquo;</span>
</div>
</div>
</div>
<div class="abs" style="left:300px;top:1037px;line-height:22px;font-size:14px;color:#121926;white-space:nowrap;letter-spacing:-.08px">Copyright 2025 &copy; Smart PMS SaaS All rights reserved.</div>
<div class="abs" style="left:1657px;top:1037px;line-height:22px;font-size:14px;color:#121926;white-space:nowrap">Privacy Policy</div>
<div class="abs" style="left:1758px;top:1037px;line-height:22px;font-size:14px;color:#121926;white-space:nowrap">Terms &amp; Conditions</div>
</body>
</html>
